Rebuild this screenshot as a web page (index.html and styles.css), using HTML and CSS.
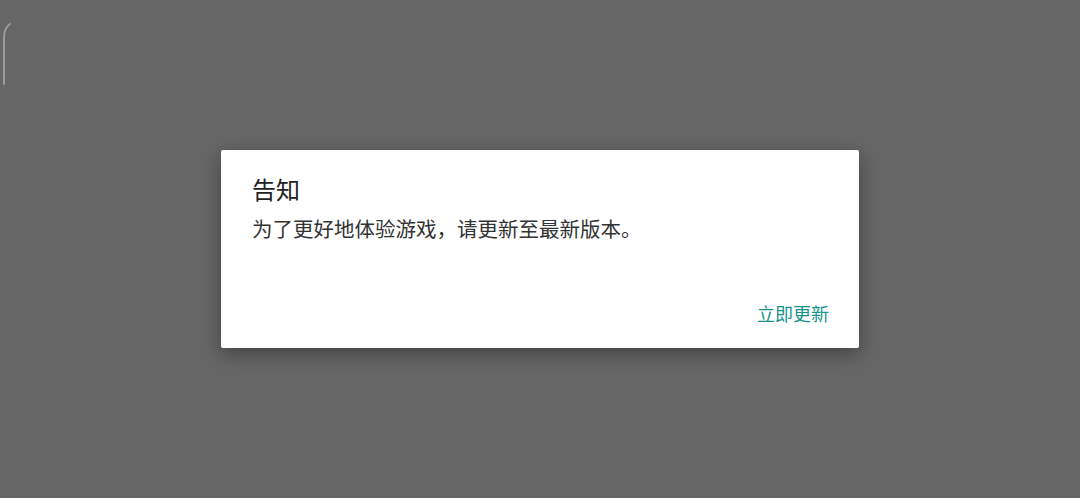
FILE: index.html
```html
<!DOCTYPE html>
<html lang="zh-CN">

<head>
    <meta charset="UTF-8">
    <meta name="viewport" content="width=device-width, initial-scale=1.0">
    <title>告知</title>
    <link rel="stylesheet" href="styles.css">
</head>

<body>
    <div class="edge">
        <svg width="14" height="70" viewBox="0 0 14 70">
            <path d="M4 62 L4 16 Q4 6 10 2" fill="none" stroke="#9a9a9a" stroke-width="2" stroke-linecap="round" />
        </svg>
    </div>
    <div class="dialog">
        <div class="dialog-title">告知</div>
        <div class="dialog-msg">为了更好地体验游戏，请更新至最新版本。</div>
        <div class="dialog-actions">
            <span class="btn">立即更新</span>
        </div>
    </div>
</body>

</html>
```

FILE: styles.css
```css
html,
body {
    padding: 0;
    margin: 0;
    height: 100%;
}

body {
    background-color: #666;
    display: flex;
    align-items: center;
    justify-content: center;
    font-family: "Noto Sans CJK SC", "Noto Sans", sans-serif;
}

.edge {
    position: absolute;
    left: 0;
    top: 22px;
}

.dialog {
    width: 638px;
    height: 198px;
    box-sizing: border-box;
    background-color: #fff;
    border-radius: 2px;
    box-shadow: 0 6px 20px rgba(0, 0, 0, 0.35);
    padding: 23px 30px 0 31px;
    display: flex;
    flex-direction: column;
}

.dialog-title {
    font-size: 24px;
    line-height: 32px;
    color: #222;
}

.dialog-msg {
    margin-top: 9px;
    font-size: 20.5px;
    line-height: 28px;
    color: #333;
}

.dialog-actions {
    margin-top: auto;
    margin-bottom: 23px;
    display: flex;
    justify-content: flex-end;
}

.btn {
    font-size: 18px;
    line-height: 24px;
    color: #16948a;
}
```
